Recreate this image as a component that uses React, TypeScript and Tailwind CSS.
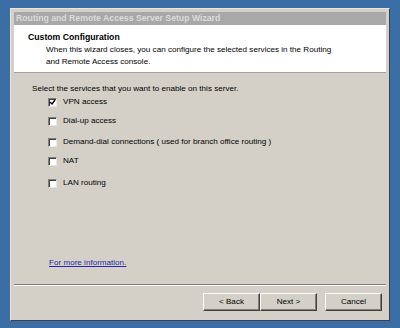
import React from 'react';

const services = [
  { label: 'VPN access', checked: true, gap: 'mt-0' },
  { label: 'Dial-up access', checked: false, gap: 'mt-[9px]' },
  { label: 'Demand-dial connections ( used for branch office routing )', checked: false, gap: 'mt-[11px]' },
  { label: 'NAT', checked: false, gap: 'mt-[9px]' },
  { label: 'LAN routing', checked: false, gap: 'mt-[12px]' },
];

const Check: React.FC<{ checked: boolean }> = ({ checked }) => (
  <div className="w-[9px] h-[9px] bg-white border border-t-[#808080] border-l-[#808080] border-b-[#e8e8e8] border-r-[#e8e8e8] shadow-[inset_1px_1px_0_#404040] flex items-center justify-center shrink-0">
    {checked && (
      <svg width="7" height="7" viewBox="0 0 7 7">
        <path d="M1 3 L3 5 L6 1" stroke="#000" strokeWidth="1.4" fill="none" />
      </svg>
    )}
  </div>
);

const Btn: React.FC<{ label: string; w: string }> = ({ label, w }) => (
  <div className={`${w} h-[18px] bg-[#d4d0c8] border border-t-white border-l-white border-b-[#404040] border-r-[#404040] shadow-[inset_-1px_-1px_0_#808080] flex items-center justify-center text-black`}>
    {label}
  </div>
);

export default function App() {
  return (
    <div
      className="w-[400px] h-[328px] bg-[#3a6ea5] pt-[8px] pl-[10px] overflow-hidden text-[8.1px] text-black"
      style={{ fontFamily: '"Liberation Sans", Arial, sans-serif' }}
    >
      <div className="w-[380px] h-[313px] bg-[#d4d0c8] border border-t-[#e8e6e0] border-l-[#e8e6e0] border-b-[#404040] border-r-[#404040] flex flex-col p-[3px] pb-[2px]">
        <div className="h-[13px] bg-[#a8a8a8] text-[#dcdcdc] font-bold text-[8.7px] pl-[2px] leading-[13px] whitespace-nowrap">
          Routing and Remote Access Server Setup Wizard
        </div>
        <div className="h-[48px] bg-white border-b border-[#a0a0a0] pl-[14px] pt-[7px]">
          <div className="font-bold text-[8.7px] leading-[11px]">Custom Configuration</div>
          <div className="pl-[18px] leading-[12px] mt-[1px]">
            <div>When this wizard closes, you can configure the selected services in the Routing</div>
            <div>and Remote Access console.</div>
          </div>
        </div>
        <div className="flex-1 flex flex-col pl-[18px] pt-[10px]">
          <div className="leading-[11px]">Select the services that you want to enable on this server.</div>
          <div className="flex flex-col pl-[16px] mt-[3px]">
            {services.map((s) => (
              <div key={s.label} className={`flex items-center gap-[6px] h-[10px] leading-[10px] ${s.gap}`}>
                <Check checked={s.checked} />
                <span>{s.label}</span>
              </div>
            ))}
          </div>
          <div className="flex-1" />
          <div className="pl-[17px] mb-[16px] leading-[11px]">
            <span className="text-[#2a2aa8] underline">For more information.</span>
          </div>
        </div>
        <div className="border-t border-t-[#808080] border-b border-b-white" />
        <div className="h-[32px] flex items-center justify-end pr-[4px]">
          <Btn label="< Back" w="w-[57px]" />
          <Btn label="Next >" w="w-[57px]" />
          <div className="w-[8px]" />
          <Btn label="Cancel" w="w-[57px]" />
        </div>
      </div>
    </div>
  );
}
